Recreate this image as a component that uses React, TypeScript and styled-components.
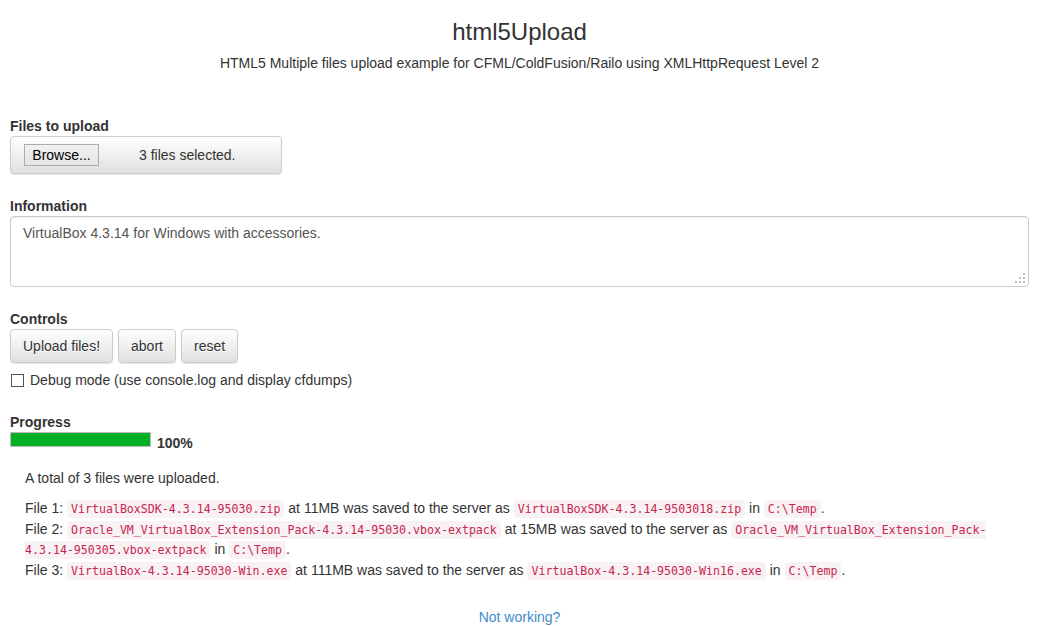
import React from "react";
import { styled, createGlobalStyle } from "styled-components";

const GlobalStyle = createGlobalStyle`
  body {
    margin: 0;
    font-family: "Liberation Sans", Arial, sans-serif;
    font-size: 14px;
    line-height: 20px;
    color: #333;
    background: #fff;
  }
`;

const Page = styled.div`
  padding: 19px 13px 0 10px;
`;

const Header = styled.header`
  text-align: center;
  margin-bottom: 43px;
`;

const Title = styled.h1`
  margin: 0;
  font-size: 24px;
  font-weight: 400;
  line-height: 26px;
`;

const Lead = styled.p`
  margin: 8px 0 0;
`;

const Group = styled.div<{ $gap?: number }>`
  margin-bottom: ${({ $gap }) => ($gap ?? 22)}px;
`;

const Label = styled.label`
  display: block;
  font-weight: bold;
`;

const FileBox = styled.div`
  box-sizing: border-box;
  width: 272px;
  height: 38px;
  display: flex;
  align-items: center;
  padding-left: 13px;
  border: 1px solid #ccc;
  border-radius: 4px;
  background: linear-gradient(to bottom, #fff 0%, #e0e0e0 100%);
  box-shadow: 0 1px 1px rgba(0, 0, 0, 0.1);
`;

const BrowseButton = styled.span`
  box-sizing: border-box;
  width: 75px;
  height: 22px;
  display: flex;
  align-items: center;
  justify-content: center;
  border: 1px solid #adadad;
  background: linear-gradient(to bottom, #f0f0f0, #e5e5e5);
  color: #000;
`;

const FileName = styled.span`
  margin-left: 40px;
`;

const TextWrap = styled.div`
  position: relative;
  box-sizing: border-box;
  height: 71px;
  border: 1px solid #ccc;
  border-radius: 4px;
  box-shadow: inset 0 1px 1px rgba(0, 0, 0, 0.075);
`;

const TextArea = styled.textarea`
  box-sizing: border-box;
  display: block;
  width: 100%;
  height: 100%;
  border: 0;
  background: transparent;
  padding: 6px 12px;
  resize: none;
  outline: none;
  font: inherit;
  line-height: 20px;
  color: #555;
`;

const Grip = styled.svg`
  position: absolute;
  right: 2px;
  bottom: 2px;
`;

const ButtonRow = styled.div`
  display: flex;
  gap: 5px;
`;

const Button = styled.button`
  box-sizing: border-box;
  height: 34px;
  padding: 6px 12px;
  font: inherit;
  line-height: 20px;
  color: #333;
  border: 1px solid #ccc;
  border-radius: 4px;
  background: linear-gradient(to bottom, #fff 0%, #e0e0e0 100%);
  text-shadow: 0 1px 0 #fff;
  box-shadow: 0 1px 1px rgba(0, 0, 0, 0.1);
`;

const CheckRow = styled.label`
  display: flex;
  align-items: center;
  gap: 6px;
  margin-top: 7px;
  padding-left: 1px;
`;

const Check = styled.input`
  appearance: none;
  box-sizing: border-box;
  width: 13px;
  height: 13px;
  margin: 0;
  border: 1px solid #555;
  background: #fff;
`;

const ProgressRow = styled.div`
  display: flex;
  align-items: flex-end;
  gap: 6px;
  height: 20px;
`;

const Bar = styled.div`
  box-sizing: border-box;
  width: 141px;
  height: 15px;
  border: 1px solid #bcbcbc;
  background: #e6e6e6;
  margin-bottom: 5px;
`;

const Fill = styled.div`
  height: 100%;
  background: #06b025;
`;

const Percent = styled.b`
  line-height: 20px;
  position: relative;
  top: 1px;
`;

const Results = styled.div`
  padding-left: 15px;
  margin-top: 16px;
`;

const Summary = styled.p`
  margin: 0 0 10px;
`;

const Files = styled.p`
  margin: 0;
  line-height: 20.6px;
`;

const Code = styled.code`
  font-family: "DejaVu Sans Mono", "Liberation Mono", monospace;
  font-size: 11.6px;
  line-height: 1;
  padding: 2px 4px;
  color: #c7254e;
  background: #f9f2f4;
  border-radius: 4px;
`;

const Footer = styled.div`
  text-align: center;
  margin-top: 27px;
`;

const Link = styled.a`
  color: #428bca;
  text-decoration: none;
`;

const files = [
  {
    name: "VirtualBoxSDK-4.3.14-95030.zip",
    size: "11MB",
    saved: ["VirtualBoxSDK-4.3.14-9503018.zip"],
  },
  {
    name: "Oracle_VM_VirtualBox_Extension_Pack-4.3.14-95030.vbox-extpack",
    size: "15MB",
    saved: ["Oracle_VM_VirtualBox_Extension_Pack-", "4.3.14-950305.vbox-extpack"],
  },
  {
    name: "VirtualBox-4.3.14-95030-Win.exe",
    size: "111MB",
    saved: ["VirtualBox-4.3.14-95030-Win16.exe"],
  },
];

const gripDots = [
  [9, 1],
  [5, 5],
  [9, 5],
  [1, 9],
  [5, 9],
  [9, 9],
];

export default function App() {
  return (
    <Page>
      <GlobalStyle />
      <Header>
        <Title>html5Upload</Title>
        <Lead>HTML5 Multiple files upload example for CFML/ColdFusion/Railo using XMLHttpRequest Level 2</Lead>
      </Header>

      <Group>
        <Label>Files to upload</Label>
        <FileBox>
          <BrowseButton>Browse...</BrowseButton>
          <FileName>3 files selected.</FileName>
        </FileBox>
      </Group>

      <Group>
        <Label>Information</Label>
        <TextWrap>
          <TextArea defaultValue="VirtualBox 4.3.14 for Windows with accessories." />
          <Grip width="12" height="12" viewBox="0 0 12 12">
            {gripDots.map(([x, y], i) => (
              <rect key={i} x={x} y={y} width="2" height="2" fill="#bdbdbd" />
            ))}
          </Grip>
        </TextWrap>
      </Group>

      <Group>
        <Label>Controls</Label>
        <ButtonRow>
          <Button>Upload files!</Button>
          <Button>abort</Button>
          <Button>reset</Button>
        </ButtonRow>
        <CheckRow>
          <Check type="checkbox" />
          Debug mode (use console.log and display cfdumps)
        </CheckRow>
      </Group>

      <Label>Progress</Label>
      <ProgressRow>
        <Bar>
          <Fill style={{ width: "100%" }} />
        </Bar>
        <Percent>100%</Percent>
      </ProgressRow>

      <Results>
        <Summary>A total of 3 files were uploaded.</Summary>
        <Files>
          {files.map((f, i) => (
            <React.Fragment key={i}>
              File {i + 1}: <Code>{f.name}</Code> at {f.size} was saved to the server as{" "}
              <Code>
                {f.saved.map((part, j) => (
                  <React.Fragment key={j}>
                    {j > 0 && <br />}
                    {part}
                  </React.Fragment>
                ))}
              </Code>{" "}
              in <Code>C:\Temp</Code>.
              {i < files.length - 1 && <br />}
            </React.Fragment>
          ))}
        </Files>
      </Results>

      <Footer>
        <Link href="#">Not working?</Link>
      </Footer>
    </Page>
  );
}
